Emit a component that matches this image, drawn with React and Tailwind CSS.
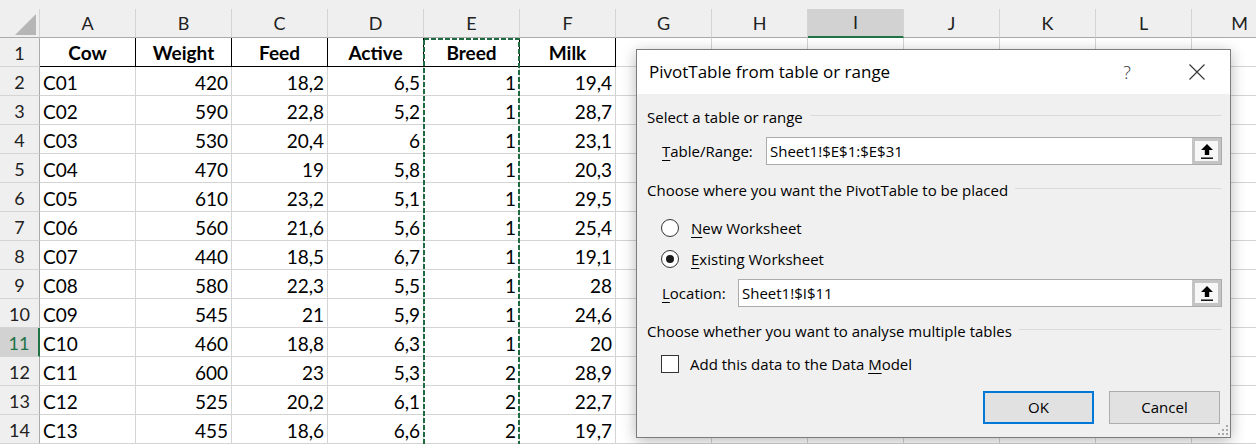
import React from "react";

const COLS = ["A", "B", "C", "D", "E", "F", "G", "H", "I", "J", "K", "L", "M"];
const HEAD = ["Cow", "Weight", "Feed", "Active", "Breed", "Milk"];
const DATA = [
  ["C01", "420", "18,2", "6,5", "1", "19,4"],
  ["C02", "590", "22,8", "5,2", "1", "28,7"],
  ["C03", "530", "20,4", "6", "1", "23,1"],
  ["C04", "470", "19", "5,8", "1", "20,3"],
  ["C05", "610", "23,2", "5,1", "1", "29,5"],
  ["C06", "560", "21,6", "5,6", "1", "25,4"],
  ["C07", "440", "18,5", "6,7", "1", "19,1"],
  ["C08", "580", "22,3", "5,5", "1", "28"],
  ["C09", "545", "21", "5,9", "1", "24,6"],
  ["C10", "460", "18,8", "6,3", "1", "20"],
  ["C11", "600", "23", "5,3", "2", "28,9"],
  ["C12", "525", "20,2", "6,1", "2", "22,7"],
  ["C13", "455", "18,6", "6,6", "2", "19,7"],
];

function ColHeader() {
  return (
    <div className="flex h-[38px] items-end bg-[#efefef]">
      <div className="flex h-[29px] w-[40px] shrink-0 items-end justify-end border-r border-b border-r-[#d4d4d4] border-b-[#ababab] pr-[3px] pb-[2px]">
        <svg width="21" height="21" viewBox="0 0 21 21">
          <path d="M21 0 V21 H0 Z" fill="#b6b6b6" />
        </svg>
      </div>
      {COLS.map((c) =>
        c === "I" ? (
          <div
            key={c}
            className="flex h-[29px] w-[96px] shrink-0 items-center justify-center border-r border-b-2 border-r-[#d4d4d4] border-b-[#217346] bg-[#d2d2d2] text-[18px] text-[#222]"
          >
            {c}
          </div>
        ) : (
          <div
            key={c}
            className="flex h-[29px] w-[96px] shrink-0 items-center justify-center border-r border-b border-r-[#d4d4d4] border-b-[#ababab] text-[18px] text-[#222]"
          >
            {c}
          </div>
        )
      )}
    </div>
  );
}

function RowNum({ n }) {
  if (n === 11) {
    return (
      <div className="flex h-[29px] w-[40px] shrink-0 items-center justify-center border-r-2 border-b border-r-[#217346] border-b-[#d4d4d4] bg-[#d2d2d2] pt-[2px] text-[18px] text-[#217346]">
        {n}
      </div>
    );
  }
  return (
    <div className="flex h-[29px] w-[40px] shrink-0 items-center justify-center border-r border-b border-r-[#ababab] border-b-[#d4d4d4] bg-[#efefef] pt-[2px] text-[18px] text-[#222]">
      {n}
    </div>
  );
}

function HeadRow() {
  return (
    <div className="flex h-[29px]">
      <RowNum n={1} />
      {HEAD.map((h) => (
        <div
          key={h}
          className="flex h-[29px] w-[96px] shrink-0 items-center justify-center border-r border-b border-black pt-[3px] text-[19px] font-bold text-black"
        >
          {h}
        </div>
      ))}
      {COLS.slice(6).map((c) => (
        <div key={c} className="h-[29px] w-[96px] shrink-0 border-r border-b border-[#d4d4d4]" />
      ))}
    </div>
  );
}

function DataRow({ n, row }) {
  return (
    <div className="flex h-[29px]">
      <RowNum n={n} />
      {row.map((v, i) => (
        <div
          key={i}
          className={`flex h-[29px] w-[96px] shrink-0 items-center border-r border-b border-[#d4d4d4] pt-[4px] pr-[3px] pl-[3px] text-[19px] text-black ${
            i === 0 ? "justify-start" : "justify-end"
          }`}
        >
          {v}
        </div>
      ))}
      {COLS.slice(6).map((c) => (
        <div key={c} className="h-[29px] w-[96px] shrink-0 border-r border-b border-[#d4d4d4]" />
      ))}
    </div>
  );
}

function Heading({ text, className = "" }) {
  return (
    <div className={`flex h-[20px] items-center ${className}`}>
      <span className="shrink-0">{text}</span>
      <div className="mb-[3px] ml-[7px] h-px flex-1 bg-[#dadada]" />
    </div>
  );
}

function RefInput({ value }) {
  return (
    <div className="flex h-[28px] flex-1 items-stretch border border-[#ababab] bg-white">
      <div className="flex flex-1 items-center pl-[3px]">{value}</div>
      <div className="flex w-[29px] shrink-0 items-center justify-center border-[3px] border-[#c4c4c4] bg-[#f7f7f7]">
        <svg width="12" height="15" viewBox="0 0 12 15">
          <path d="M6 0 L12 6 H8.2 V11 H3.8 V6 H0 Z" fill="#000" />
          <rect x="0" y="13.5" width="12" height="1.4" fill="#000" />
        </svg>
      </div>
    </div>
  );
}

function Radio({ label, hot, checked, className = "" }) {
  return (
    <div className={`flex h-[20px] items-center pl-[14px] ${className}`}>
      <div className="flex h-[18px] w-[18px] shrink-0 items-center justify-center rounded-full border border-[#333] bg-white">
        {checked && <div className="h-[8px] w-[8px] rounded-full bg-[#1a1a1a]" />}
      </div>
      <span className="ml-[12px]">
        <span className="underline underline-offset-[3px]">{hot}</span>
        {label}
      </span>
    </div>
  );
}

function Dialog() {
  return (
    <div
      className="absolute top-[49px] left-[636px] flex h-[389px] w-[595px] flex-col border border-[#7c7c7c] bg-[#f0f0f0] shadow-[0_3px_14px_rgba(0,0,0,0.28)]"
      style={{ fontFamily: '"Open Sans", "Noto Sans", sans-serif' }}
    >
      <div className="flex h-[44px] shrink-0 items-center bg-white pl-[12px] pr-[10px]">
        <span className="text-[17px] text-black">PivotTable from table or range</span>
        <span className="ml-auto w-[46px] text-center text-[18px] font-light text-[#333]">?</span>
        <div className="ml-[24px] flex w-[46px] items-center justify-center">
          <svg width="16" height="16" viewBox="0 0 16 16">
            <path d="M0.5 0.5 L15.5 15.5 M15.5 0.5 L0.5 15.5" stroke="#333" strokeWidth="1.1" fill="none" />
          </svg>
        </div>
      </div>
      <div className="relative flex flex-1 flex-col pt-[13px] pr-[8px] pl-[10px] text-[15px] text-black">
        <Heading text="Select a table or range" />
        <div className="mt-[10px] flex h-[28px] items-center pl-[15px]">
          <span className="w-[104px] shrink-0">
            <span className="underline underline-offset-[3px]">T</span>able/Range:
          </span>
          <RefInput value="Sheet1!$E$1:$E$31" />
        </div>
        <Heading className="mt-[15px]" text="Choose where you want the PivotTable to be placed" />
        <Radio className="mt-[18px]" hot="N" label="ew Worksheet" />
        <Radio className="mt-[11px]" hot="E" label="xisting Worksheet" checked />
        <div className="mt-[10px] flex h-[28px] items-center pl-[15px]">
          <span className="w-[76px] shrink-0">
            <span className="underline underline-offset-[3px]">L</span>ocation:
          </span>
          <RefInput value="Sheet1!$I$11" />
        </div>
        <Heading className="mt-[14px]" text="Choose whether you want to analyse multiple tables" />
        <div className="mt-[13px] flex h-[20px] items-center pl-[14px]">
          <div className="h-[18px] w-[18px] shrink-0 border border-[#333] bg-white" />
          <span className="ml-[11px]">
            Add this data to the Data <span className="underline underline-offset-[3px]">M</span>odel
          </span>
        </div>
        <div className="mt-[17px] flex justify-end gap-[15px] pr-[2px]">
          <button className="flex h-[33px] w-[111px] items-center justify-center border-2 border-[#0078d7] bg-[#e1e1e1] text-[15px]">
            OK
          </button>
          <button className="flex h-[33px] w-[111px] items-center justify-center border border-[#adadad] bg-[#e1e1e1] text-[15px]">
            Cancel
          </button>
        </div>
        <svg className="absolute right-[1px] bottom-[1px]" width="11" height="11" viewBox="0 0 11 11">
          <rect x="8" y="0" width="2" height="2" fill="#a8a8a8" />
          <rect x="4" y="4" width="2" height="2" fill="#a8a8a8" />
          <rect x="8" y="4" width="2" height="2" fill="#a8a8a8" />
          <rect x="0" y="8" width="2" height="2" fill="#a8a8a8" />
          <rect x="4" y="8" width="2" height="2" fill="#a8a8a8" />
          <rect x="8" y="8" width="2" height="2" fill="#a8a8a8" />
        </svg>
      </div>
    </div>
  );
}

export default function App() {
  return (
    <div
      className="relative h-[444px] w-[1256px] overflow-hidden bg-white"
      style={{ fontFamily: 'Lato, "Liberation Sans", sans-serif' }}
    >
      <ColHeader />
      <HeadRow />
      {DATA.map((r, i) => (
        <DataRow key={i} n={i + 2} row={r} />
      ))}
      {/* copy marquee around column E */}
      <svg className="absolute top-[37px] left-[422px]" width="100" height="420" viewBox="0 0 100 420">
        <rect x="2" y="2" width="95" height="440" fill="none" stroke="#1e6b41" strokeWidth="2" strokeDasharray="5 2" />
      </svg>
      <Dialog />
    </div>
  );
}
